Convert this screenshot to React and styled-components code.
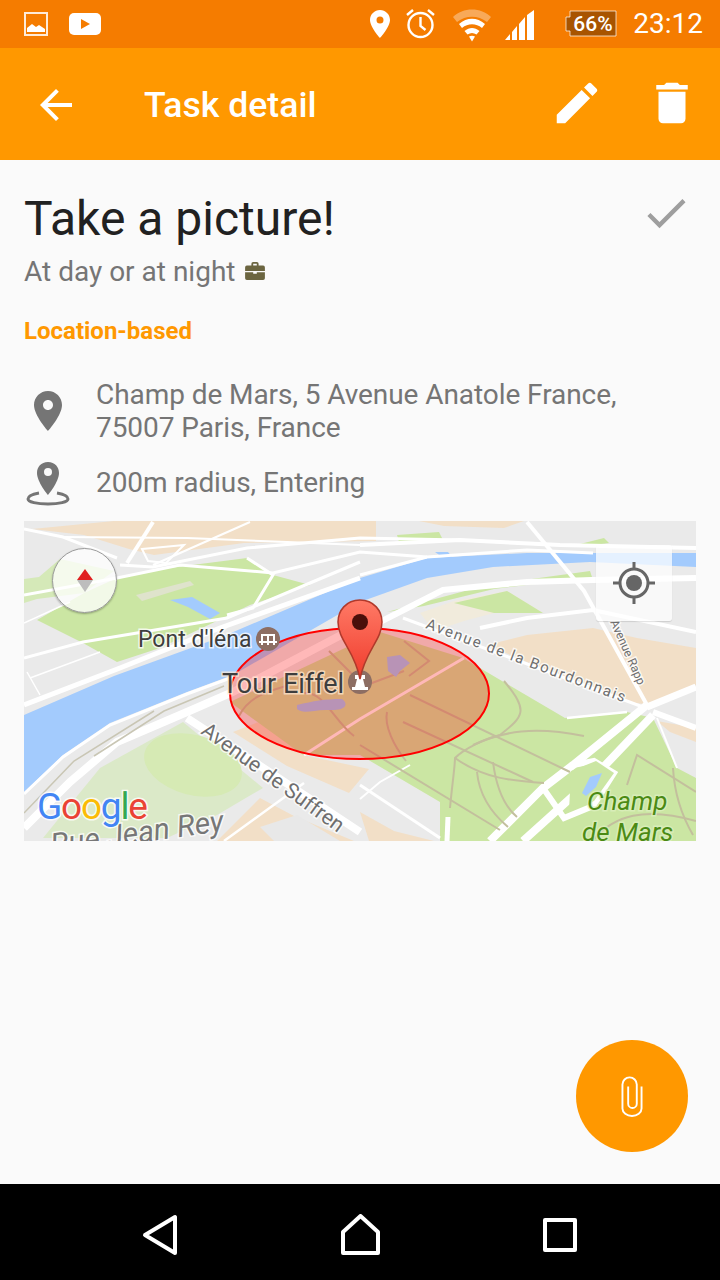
import styled, { createGlobalStyle } from "styled-components";

const Global = createGlobalStyle`
html, body { margin: 0; padding: 0; background: #fafafa; }
* { box-sizing: border-box; }
`;

const Screen = styled.div`
position: relative;
width: 720px;
height: 1280px;
display: flex;
flex-direction: column;
overflow: hidden;
background: #fafafa;
font-family: Roboto, "Liberation Sans", sans-serif;
`;

const StatusBar = styled.div`
height: 48px;
flex-shrink: 0;
display: flex;
justify-content: space-between;
align-items: center;
padding: 0 17px 0 24px;
background: #f57c00;
`;
const StatusGroup = styled.div`
display: flex;
align-items: center;
gap: ${p => p.$gap}px;
`;
const Clock = styled.span`
color: #fff;
font-size: 28px;
line-height: 48px;
margin-left: 16px;
`;
const StatusIcon = styled.svg`
display: block;
flex-shrink: 0;
margin-left: ${p => p.$ml || 0}px;
`;

const Toolbar = styled.header`
height: 112px;
flex-shrink: 0;
display: flex;
align-items: center;
padding: 2px 21px 0 32px;
background: #ff9800;
`;
const ToolbarTitle = styled.h1`
flex: 1;
margin: 0 0 0 64px;
color: #fff;
font-size: 35.6px;
font-weight: 500;
`;
const ToolbarActions = styled.div`
display: flex;
align-items: center;
gap: 41px;
margin-top: -4px;
`;

const Content = styled.main`
flex: 1;
padding: 0 24px;
display: flex;
flex-direction: column;
`;
const TitleRow = styled.div`
display: flex;
justify-content: space-between;
align-items: flex-start;
height: 92px;
padding-top: 31px;
`;
const Title = styled.h2`
margin: 0;
color: #212121;
font-size: 48px;
line-height: 55px;
font-weight: 400;
`;
const CheckIcon = styled.svg`
display: block;
margin: -4px 4px 0 0;
`;
const Subtitle = styled.div`
display: flex;
align-items: center;
gap: 9px;
height: 38px;
color: #757575;
font-size: 28px;
`;
const Category = styled.div`
margin-top: 25px;
color: #ff9800;
font-size: 24px;
line-height: 32px;
font-weight: 700;
`;
const InfoRow = styled.div`
display: flex;
align-items: center;
margin-top: ${p => p.$mt}px;
color: #757575;
font-size: 28px;
line-height: 33px;
letter-spacing: -0.07px;
`;
const InfoIcon = styled.svg`
display: block;
flex-shrink: 0;
margin-right: 24px;
`;

const MapBox = styled.div`
position: relative;
width: 672px;
height: 320px;
margin-top: 15px;
overflow: hidden;
`;
const MapCanvas = styled.svg`
display: block;
width: 672px;
height: 320px;
`;
const MapLabel = styled.text`
font-family: Roboto, "Liberation Sans", sans-serif;
font-size: ${p => p.$size}px;
font-style: ${p => (p.$italic ? "italic" : "normal")};
fill: ${p => p.$color};
stroke: ${p => p.$halo || "rgba(255,255,255,.75)"};
stroke-width: 3px;
paint-order: stroke;
`;
const Compass = styled.div`
position: absolute;
left: 28px;
top: 27px;
width: 65px;
height: 65px;
display: flex;
align-items: center;
justify-content: center;
border-radius: 50%;
background: rgba(255, 255, 255, 0.75);
border: 1px solid #9a9a9a;
box-shadow: 0 1px 2px rgba(0, 0, 0, 0.3);
`;
const LocateButton = styled.div`
position: absolute;
left: 572px;
top: 24px;
width: 76px;
height: 76px;
display: flex;
align-items: center;
justify-content: center;
border-radius: 3px;
background: rgba(255, 255, 255, 0.72);
box-shadow: 0 1px 1px rgba(0, 0, 0, 0.12);
`;

const Fab = styled.button`
position: absolute;
left: 576px;
top: 1040px;
width: 112px;
height: 112px;
padding: 0;
border: none;
border-radius: 50%;
background: #ff9800;
display: flex;
align-items: center;
justify-content: center;
`;

const NavBar = styled.nav`
height: 96px;
flex-shrink: 0;
background: #000;
display: flex;
align-items: center;
padding: 6px 0 0 141px;
`;
const NavIcon = styled.svg`
display: block;
margin-right: ${p => p.$mr}px;
`;

const green = "#cbe6a3";
const beige = "#f2dfc7";
const paleGreen = "#dbe9c8";
const water = "#a3cbfd";

// [points, fill]
const areas = [
  ["8,8 60,14 105,28 130,34 220,22 352,20 352,0 90,0", beige],
  ["395,0 500,0 480,7 420,5", beige],
  ["0,58 15,56 36,38 90,50 60,72 13,78 0,82", "#d5e9b8"],
  ["13,99 60,72 93,57 129,49 223,37 249,54 286,64 226,84 199,97 136,127 93,141 59,122", green],
  ["373,14 415,11 419,19 375,21", green],
  ["556,23 580,17 585,22 562,25", green],
  ["19,317 76,247 159,201 239,267 193,294 143,317", paleGreen],
  ["209,211 250,195 279,234 345,248 325,272 263,245", beige],
  ["193,320 236,277 270,295 330,320", beige],
  ["236,306 273,294 316,320 250,320", "#e8e8e8"],
  ["336,291 370,310 410,320 345,320", beige],
  ["463,124 503,114 569,107 613,117 672,127 672,164 629,184 603,181 536,157 503,141", beige],
  ["633,200 672,207 672,221 646,211", beige],
  ["206,181 336,120 356,111 439,137 541,197 603,191 629,197 653,247 672,257 672,320 416,320 416,281 336,234 279,234", green],
  ["363,91 463,64 566,50 568,56 470,68 400,85", green],
  ["396,92 430,80 483,70 519,92 470,92 440,100 410,110", "#f1ebdc"],
  ["430,82 483,70 519,92 470,92", green],
  ["0,194 90,155 200,115 336,57 403,37 503,32 672,32 672,46 566,41 469,46 403,57 336,81 209,154 163,171 86,202 39,234 0,271", water],
  ["411,31 424,31 428,36 418,36", water]
];

// [points, stroke width]
const roads = [
  ["96,44 129,46 223,27 336,17 436,19", 3],
  ["0,8 39,16 93,37", 3],
  ["129,1 103,42", 4],
  ["226,1 129,44", 2],
  ["39,16 163,17 263,21 336,24", 2],
  ["0,74 93,57 156,44 249,52 336,31 403,36", 3],
  ["223,37 249,54 229,87 203,94", 3],
  ["0,102 46,81", 1.5],
  ["0,137 59,121 203,97 286,62 336,41", 3],
  ["0,184 96,147 196,107 336,57", 5],
  ["3,151 16,174", 1.5],
  ["6,157 76,131", 1.5],
  ["0,307 46,261 93,221 163,191 209,171 336,104 356,101", 8],
  ["0,273 39,236 86,204 163,173 209,156", 3],
  ["163,197 250,254 336,311", 8],
  ["336,54 403,36 503,29 569,32", 3],
  ["336,24 436,19 536,24 672,27", 4],
  ["503,1 560,70 623,184", 4],
  ["356,101 419,69 503,61 569,59 672,57", 6],
  ["456,107 503,97 569,89 672,111", 4],
  ["623,186 672,166", 7],
  ["629,191 672,207", 6],
  ["633,197 653,247", 2],
  ["543,197 603,191", 2.5],
  ["379,97 619,186", 3],
  ["466,320 519,267 549,244 623,184", 8],
  ["499,320 569,257 629,194", 8],
  ["280,234 336,198 440,137", 3],
  ["200,320 280,262", 2.5],
  ["336,264 416,317", 3],
  ["336,278 356,261 386,244", 2],
  ["424,296 423,320", 5]
];

const paths = [
  "M363 191 C360 205 370 225 382 240",
  "M426 287 C428 265 431 245 431 237 C440 228 460 218 476 214",
  "M379 201 L509 261",
  "M386 174 L546 251",
  "M336 224 L476 309",
  "M469 241 C472 265 480 285 493 296",
  "M453 251 C455 272 465 290 484 306",
  "M603 264 L613 234 L672 271",
  "M649 247 C650 265 655 290 669 314",
  "M431 237 C460 258 490 260 520 262",
  "M449 224 C480 210 510 205 560 215",
  "M476 214 C500 195 505 190 480 160",
  "M380 120 L405 140 L385 155",
  "M280 172 C300 170 310 200 330 215",
  "M305 130 L340 165 L380 150",
  "M215 195 C225 175 245 170 262 165",
  "M570 318 C590 295 620 285 672 300"
];

const railways = [
  "0,292 50,240 130,190",
  "70,235 140,190 200,165"
];

function MapPicture() {
  return (
    <MapCanvas viewBox="0 0 672 320">
      <defs>
        <linearGradient id="pinFill" x1="0" y1="0" x2="0" y2="1">
          <stop offset="0" stopColor="#ff7a66" />
          <stop offset="1" stopColor="#ef3b2c" />
        </linearGradient>
      </defs>
      <rect width="672" height="320" fill="#eaeaea" />
      {areas.map(([pts, fill], i) => <polygon key={i} points={pts} fill={fill} />)}
      <ellipse cx="169" cy="244" rx="50" ry="30" fill="#d6eab4" transform="rotate(15 169 244)" />
      <polygon points="112,74 166,60 170,64 118,80" fill="#dfe3cc" />
      <polygon points="146,79 168,76 196,92 186,98 164,86" fill={water} />
      <polygon points="118,28 160,24 142,42 124,40" fill="none" stroke="#fff" strokeWidth="2" />
      {roads.map(([pts, w], i) => <polyline key={i} points={pts} fill="none" stroke="#fff" strokeWidth={w} />)}
      <polygon points="519,267 549,244 570,240 590,252 569,285 540,297" fill="none" stroke="#fff" strokeWidth="6" />
      <polygon points="547,250 572,240 590,252 570,280 545,290" fill={green} />
      <polygon points="558,272 566,256 578,252 572,266 562,275" fill={water} />
      {paths.map((d, i) => <path key={i} d={d} fill="none" stroke="#c3bf9d" strokeWidth="2" />)}
      {railways.map((pts, i) => <polyline key={i} points={pts} fill="none" stroke="#c9c6b4" strokeWidth="1.5" />)}

      <ellipse cx="335.5" cy="172.5" rx="129.5" ry="65.500" fill="rgba(255,0,0,.28)" stroke="#f00" strokeWidth="2" />
      <path d="M273 184 C290 180 300 178 318 178 C326 184 320 190 305 189 C290 188 280 194 273 188Z" fill="#b893b6" />
      <path d="M363 136 L376 134 L386 142 L376 150 L372 156 L364 150Z" fill="#b893b6" />

      <MapLabel x="114" y="126" $size={23} $color="#3e3e3e">Pont d'léna</MapLabel>
      <circle cx="244" cy="118" r="12" fill="#8d6e63" />
      <path d="M235 121h18M237 114h14M238 113v11M250 113v11M244 113v11" stroke="#fff" strokeWidth="2" fill="none" />
      <MapLabel x="198" y="172" $size={27} $color="#3e3e3e" $halo="rgba(255,235,215,.7)">Tour Eiffel</MapLabel>
      <circle cx="336" cy="161" r="12" fill="#8d6e63" />
      <path d="M331 154h10v4h-2l2 8h3v3h-16v-3h3l2-8h-2z" fill="#fff" />

      <MapLabel transform="translate(176 212) rotate(36)" $size={21} $color="#6e6e6e">Avenue de Suffren</MapLabel>
      <MapLabel transform="translate(401 107) rotate(20.5)" $size={15} $color="#6e6e6e" letterSpacing="1.700">Avenue de la Bourdonnais</MapLabel>
      <MapLabel transform="translate(586 101) rotate(66)" $size={12} $color="#6e6e6e">Avenue Rapp</MapLabel>
      <MapLabel transform="translate(28 334) rotate(-8)" $size={30} $italic $color="#777">Rue Jean Rey</MapLabel>
      <MapLabel x="563" y="289" $size={26} $italic $color="#4b8a14" $halo="rgba(220,240,190,.8)">Champ</MapLabel>
      <MapLabel x="558" y="320" $size={26} $color="#4b8a14" $italic $halo="rgba(220,240,190,.8)">de Mars</MapLabel>

      <MapLabel x="13" y="298" $size={37} $color="#4285f4" $halo="rgba(255,255,255,.8)" letterSpacing="-1.200">
        G<tspan fill="#ea4335">o</tspan><tspan fill="#fbbc05">o</tspan><tspan fill="#4285f4">g</tspan><tspan fill="#34a853">l</tspan><tspan fill="#ea4335">e</tspan>
      </MapLabel>

      <path d="M336 79 C322 79 314 90 314 101 C314 119 331 130 336 158 C341 130 358 119 358 101 C358 90 350 79 336 79Z" fill="url(#pinFill)" stroke="#b0392b" strokeWidth="1.500" />
      <circle cx="336" cy="101" r="8" fill="#4a0f0a" />
    </MapCanvas>
  );
}

export default function App() {
  return (
    <Screen>
      <Global />
      <StatusBar>
        <StatusGroup $gap={21}>
          <StatusIcon width="24" height="48" viewBox="0 0 24 48">
            <rect x="1" y="13" width="22" height="22" fill="none" stroke="#fff" strokeOpacity=".85" strokeWidth="2" />
            <path d="M3 32v-4l5-4 4 3 3-2 6 4v3z" fill="#fff" />
          </StatusIcon>
          <StatusIcon width="32" height="48" viewBox="0 0 32 48">
            <rect x="0" y="13" width="32" height="22" rx="5" fill="#fff" />
            <path d="M12 19l9 5-9 5z" fill="#f57c00" />
          </StatusIcon>
        </StatusGroup>
        <StatusGroup $gap={0}>
          <StatusIcon width="20" height="48" viewBox="0 0 20 48">
            <path fillRule="evenodd" d="M10 10C4.500 10 0 14.400 0 20c0 7 10 18 10 18s10-11 10-18c0-5.600-4.500-10-10-10zm0 13.500a3.500 3.500 0 1 1 0-7 3.500 3.500 0 0 1 0 7z" fill="#fff" />
          </StatusIcon>
          <StatusIcon $ml={16} width="29" height="48" viewBox="0 0 29 48" fill="none" stroke="#fff" strokeWidth="2.400">
            <circle cx="14.500" cy="25" r="12" />
            <path d="M14.500 17v9l5 4M1 15l6-5M28 15l-6-5" />
          </StatusIcon>
          <StatusIcon $ml={18} width="38" height="48" viewBox="0 0 38 48">
            <path d="M0 17C10 7 28 7 38 17l-4 5C25 15 13 15 4 22z" fill="#fff" fillOpacity=".35" />
            <path d="M6 24c8-7 18-7 26 0l-3 4c-6-5-14-5-20 0zM11.500 31c5-4 10-4 15 0l-3 3.500c-3-2-6-2-9 0zM16 36.500c2-1 4-1 6 0l-3 5z" fill="#fff" />
          </StatusIcon>
          <StatusIcon $ml={14} width="30" height="48" viewBox="0 0 30 48">
            <path d="M0 40l5-6v6zM7 40V32l5-6v14zM14 40V24l6-7v23zM22 40V15l7-5v30z" fill="#fff" />
          </StatusIcon>
          <StatusIcon $ml={30} width="52" height="48" viewBox="0 0 52 48">
            <path d="M5 11h46v25H5v-5H1V17h4z" fill="#a85400" stroke="#fff" strokeOpacity=".7" strokeWidth="1" />
            <text x="28" y="31" textAnchor="middle" fill="#fff" fontSize="21" fontWeight="500" fontFamily="Roboto, sans-serif">66%</text>
          </StatusIcon>
          <Clock>23:12</Clock>
        </StatusGroup>
      </StatusBar>

      <Toolbar>
        <svg width="48" height="48" viewBox="0 0 24 24" fill="#fff">
          <path d="M20 11H7.830l5.590-5.590L12 4l-8 8 8 8 1.410-1.410L7.830 13H20v-2z" />
        </svg>
        <ToolbarTitle>Task detail</ToolbarTitle>
        <ToolbarActions>
          <svg width="54" height="54" viewBox="0 0 24 24" fill="#fff">
            <path d="M3 17.250V21h3.750L17.810 9.940l-3.750-3.750L3 17.250zM20.710 7.040c.39-.39.39-1.020 0-1.410l-2.340-2.340c-.39-.39-1.020-.39-1.410 0l-1.830 1.830 3.750 3.750 1.830-1.830z" />
          </svg>
          <svg width="54" height="54" viewBox="0 0 24 24" fill="#fff">
            <path d="M6 19c0 1.100.9 2 2 2h8c1.100 0 2-.9 2-2V7H6v12zM19 4h-3.500l-1-1h-5l-1 1H5v2h14V4z" />
          </svg>
        </ToolbarActions>
      </Toolbar>

      <Content>
        <TitleRow>
          <Title>Take a picture!</Title>
          <CheckIcon width="52" height="52" viewBox="0 0 24 24" fill="#9e9e9e">
            <path d="M9 16.170L4.830 12l-1.410 1.410L9 19 21 7l-1.410-1.410z" />
          </CheckIcon>
        </TitleRow>
        <Subtitle>
          At day or at night
          <svg width="22" height="18" viewBox="0 0 22 20">
            <path d="M7 4V2a2 2 0 0 1 2-2h4a2 2 0 0 1 2 2v2h5a2 2 0 0 1 2 2v4H0V6a2 2 0 0 1 2-2zm2 0h4V2H9z" fill="#6b6540" fillRule="evenodd" />
            <path d="M0 11.500h9V13h4v-1.500h9V18a2 2 0 0 1-2 2H2a2 2 0 0 1-2-2z" fill="#6b6540" />
          </svg>
        </Subtitle>
        <Category>Location-based</Category>

        <InfoRow $mt={31}>
          <InfoIcon width="48" height="48" viewBox="0 0 24 24" fill="#757575">
            <path d="M12 2C8.130 2 5 5.130 5 9c0 5.250 7 13 7 13s7-7.750 7-13c0-3.870-3.130-7-7-7zm0 9.500c-1.380 0-2.500-1.120-2.500-2.500s1.120-2.500 2.500-2.500 2.500 1.120 2.500 2.500-1.120 2.500-2.500 2.500z" />
          </InfoIcon>
          <div>Champ de Mars, 5 Avenue Anatole France,<br />75007 Paris, France</div>
        </InfoRow>
        <InfoRow $mt={14}>
          <InfoIcon width="48" height="48" viewBox="0 0 48 48">
            <path fillRule="evenodd" d="M24 4c-7 0-11 5-11 11 0 9 11 22 11 22s11-13 11-22c0-6-4-11-11-11zm0 14a4 4 0 1 1 0-8 4 4 0 0 1 0 8z" fill="#757575" />
            <path d="M15 35c-6 1-11 3-11 6 0 3 9 5 20 5s20-2 20-5c0-3-5-5-11-6" fill="none" stroke="#757575" strokeWidth="3" />
          </InfoIcon>
          <div>200m radius, Entering</div>
        </InfoRow>

        <MapBox>
          <MapPicture />
          <Compass>
            <svg width="16" height="23" viewBox="0 0 16 23">
              <path d="M8 0l8 11H0z" fill="#e02020" />
              <path d="M0 11h16l-8 12z" fill="#bdbdbd" />
            </svg>
          </Compass>
          <LocateButton>
            <svg width="44" height="44" viewBox="0 0 44 44" fill="none" stroke="#666" strokeWidth="3">
              <circle cx="22" cy="22" r="14" />
              <circle cx="22" cy="22" r="8" fill="#666" stroke="none" />
              <path d="M22 1v7M22 36v7M1 22h7M36 22h7" />
            </svg>
          </LocateButton>
        </MapBox>
      </Content>

      <Fab>
        <svg width="24" height="42" viewBox="0 0 24 44" fill="none" stroke="#fff" strokeWidth="2">
          <path d="M22 12v23a10 8 0 0 1-20 0V10a7 7 0 0 1 15 0v20a4.500 4.500 0 0 1-9 0V12" />
        </svg>
      </Fab>

      <NavBar>
        <NavIcon $mr={162} width="37" height="42" viewBox="0 0 37 42" fill="none" stroke="#fff" strokeWidth="4" strokeLinejoin="round">
          <path d="M34 3v36L4 21z" />
        </NavIcon>
        <NavIcon $mr={162} width="41" height="42" viewBox="0 0 41 42" fill="none" stroke="#fff" strokeWidth="4" strokeLinejoin="round">
          <path d="M3 18L20.500 2 38 18v0L38 39H3z" />
        </NavIcon>
        <NavIcon $mr={0} width="34" height="34" viewBox="0 0 34 34" fill="none" stroke="#fff" strokeWidth="4" strokeLinejoin="round">
          <rect x="2" y="2" width="30" height="30" />
        </NavIcon>
      </NavBar>
    </Screen>
  );
}
